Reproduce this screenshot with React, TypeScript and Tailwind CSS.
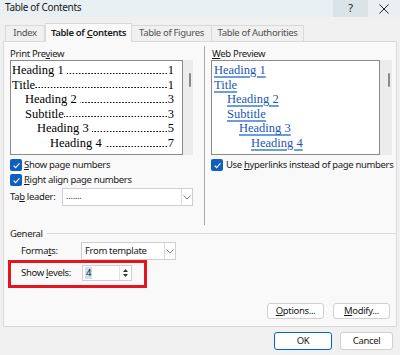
import React from "react";

const U = ({ c }: { c: string }) => <span className="underline underline-offset-[1px]">{c}</span>;

function Check() {
  return (
    <span className="w-[12px] h-[12px] rounded-[2px] bg-[#0f5fbe] flex items-center justify-center shrink-0">
      <svg width="9" height="9" viewBox="0 0 10 10">
        <path d="M1.8 5.2 L4 7.3 L8.3 2.6" stroke="white" strokeWidth="1.3" fill="none" />
      </svg>
    </span>
  );
}

function Chevron() {
  return (
    <svg width="8" height="5" viewBox="0 0 8 5">
      <path d="M0.5 0.5 L4 4 L7.5 0.5" stroke="#707070" strokeWidth="0.9" fill="none" />
    </svg>
  );
}

const printRows: [string, number, string][] = [
  ["Heading 1 ", 0, "1"],
  ["Title", 0, "1"],
  ["Heading 2 ", 1, "3"],
  ["Subtitle", 1, "3"],
  ["Heading 3 ", 2, "5"],
  ["Heading 4 ", 3, "7"],
];
const indent = ["pl-[0px]", "pl-[13px]", "pl-[25px]", "pl-[38px]"];
const windent = ["pl-[0px]", "pl-[13px]", "pl-[25px]", "pl-[37px]"];

export default function App() {
  return (
    <div
      className="w-[400px] h-[355px] bg-[#f0f0f0] relative overflow-hidden text-[#1a1a1a] text-[9.5px] tracking-[-0.33px]"
      style={{ fontFamily: '"Noto Sans", "Open Sans", sans-serif' }}
    >
      {/* title bar */}
      <div className="h-[17px] bg-[#e8f0f4] flex items-center">
        <div className="pl-[5px] flex-1 text-[10px] -mt-[2px]">Table of Contents</div>
        <div className="w-[35px] h-[17px] bg-[#d9e3e8] flex items-center justify-center text-[11px]">?</div>
        <div className="w-[32px] h-[17px] flex items-center justify-center">
          <svg width="10" height="10" viewBox="0 0 10 10">
            <path d="M0.5 0.5 L9.5 9.5 M9.5 0.5 L0.5 9.5" stroke="#222" strokeWidth="1" />
          </svg>
        </div>
      </div>

      {/* tabs */}
      <div className="flex items-end h-[24px] pl-[5px]">
        <div className="h-[16px] w-[40px] border border-b-0 border-[#d9d9d9] flex items-center justify-center text-[#505050]">Index</div>
        <div className="h-[19px] w-[87px] border border-b-0 border-[#d9d9d9] bg-[#f9f9f9] flex items-center justify-center font-semibold relative z-10 -mb-px">
          <span>Table of <U c="C" />ontents</span>
        </div>
        <div className="h-[16px] w-[80px] border border-b-0 border-l-0 border-[#d9d9d9] flex items-center justify-center text-[#505050]">Table of Figures</div>
        <div className="h-[16px] w-[92px] border border-b-0 border-l-0 border-[#d9d9d9] flex items-center justify-center text-[#505050]">Table of Authorities</div>
      </div>

      {/* panel */}
      <div className="mx-[3px] h-[286px] border border-[#dadada] bg-[#f9f9f9] px-[6px]">
        <div className="flex">
          {/* left */}
          <div className="w-[183px] shrink-0 pt-[5px]">
            <div className="h-[13px] leading-[13px]">Print Pre<U c="v" />iew</div>
            <div className="flex h-[95px]">
              <div
                className="flex-1 min-w-0 overflow-hidden bg-white border border-[#8a8a8a] pt-[2px] pl-[1px] pr-[8px] text-[12.5px] leading-[14.6px] tracking-normal text-black"
                style={{ fontFamily: '"Liberation Serif", serif' }}
              >
                {printRows.map(([t, l, n], i) => (
                  <div key={i} className={"flex items-end " + indent[l]}>
                    <span className="whitespace-pre shrink-0">{t}</span>
                    <span className="flex-1 min-w-0 h-[3px] mb-[3px] bg-[radial-gradient(circle,#111_0.65px,transparent_0.95px)] bg-[length:3.1px_3px] bg-repeat-x bg-right" />
                    <span className="shrink-0">{n}</span>
                  </div>
                ))}
              </div>
              <div className="w-[10px] bg-[#ececec] relative shrink-0">
                <div className="absolute left-[6px] top-[13px] w-[2px] h-[14px] bg-[#8a8a8a] rounded-[1px]" />
              </div>
            </div>
            <div className="mt-[3px] h-[14px] flex items-center gap-[2px]">
              <Check />
              <span><U c="S" />how page numbers</span>
            </div>
            <div className="mt-[1px] h-[14px] flex items-center gap-[2px]">
              <Check />
              <span><U c="R" />ight align page numbers</span>
            </div>
            <div className="mt-[1px] h-[18px] flex items-center">
              <span className="w-[52px] shrink-0">Ta<U c="b" /> leader:</span>
              <div className="flex-1 min-w-0 h-[18px] bg-white border border-[#cfcfcf] flex">
                <div className="flex-1 pl-[3px] leading-[14px] text-[#333]">.......</div>
                <div className="w-[11px] border-l border-[#dcdcdc] flex items-center justify-center">
                  <Chevron />
                </div>
              </div>
            </div>
          </div>

          {/* separator */}
          <div className="ml-[11px] mt-[4px] w-px h-[179px] bg-[#a8a8a8] shrink-0" />

          {/* right */}
          <div className="ml-[6px] w-[181px] shrink-0 pt-[5px]">
            <div className="h-[13px] leading-[13px] pl-[1px]"><U c="W" />eb Preview</div>
            <div className="flex h-[95px]">
              <div
                className="flex-1 min-w-0 overflow-hidden bg-white border border-[#8a8a8a] pt-[2px] pl-[2px] text-[12.5px] leading-[14.6px] tracking-normal text-[#1c56b8]"
                style={{ fontFamily: '"Liberation Serif", serif' }}
              >
                {printRows.map(([t, l], i) => (
                  <div key={i} className={windent[l]}>
                    <span className="underline decoration-[#6a9fdc] decoration-2 underline-offset-[2px]">{t.trim()}</span>
                  </div>
                ))}
              </div>
              <div className="w-[12px] bg-[#ececec] relative shrink-0">
                <div className="absolute left-[8px] top-[13px] w-[2px] h-[14px] bg-[#8a8a8a] rounded-[1px]" />
              </div>
            </div>
            <div className="mt-[3px] h-[14px] flex items-center gap-[3px] whitespace-nowrap">
              <Check />
              <span>Use <U c="h" />yperlinks instead of page numbers</span>
            </div>
          </div>
        </div>

        {/* General */}
        <div className="mt-[3px] h-[12px] flex items-center">
          <span className="leading-[12px]">General</span>
          <div className="flex-1 ml-[4px] h-px bg-[#dcdcdc] -mt-[1px] -mr-[6px]" />
        </div>
        <div className="mt-[2px] h-[18px] flex items-center pl-[11px]">
          <span className="w-[60px]">Forma<U c="t" />s:</span>
          <div className="w-[95px] h-[18px] bg-white border border-[#cfcfcf] flex">
            <div className="flex-1 pl-[3px] leading-[16px]">From template</div>
            <div className="w-[11px] border-l border-[#dcdcdc] flex items-center justify-center">
              <Chevron />
            </div>
          </div>
        </div>
        <div className="mt-[5px] h-[16px] flex items-center pl-[11px]">
          <span className="w-[61px]">Show <U c="l" />evels:</span>
          <div className="w-[50px] h-[16px] bg-white border border-[#cfcfcf] flex">
            <div className="flex-1 pl-[2px] flex items-center">
              <span className="bg-[#cce0f5] leading-[12px] px-px">4</span>
            </div>
            <div className="w-[12px] flex flex-col items-center justify-center gap-[2px] border-l border-[#e4e4e4]">
              <svg width="5" height="3" viewBox="0 0 5 3"><path d="M0 3 L2.5 0 L5 3 Z" fill="#333" /></svg>
              <svg width="5" height="3" viewBox="0 0 5 3"><path d="M0 0 L2.5 3 L5 0 Z" fill="#333" /></svg>
            </div>
          </div>
        </div>

        <div className="mt-[22px] flex justify-end gap-[9px]">
          <div className="w-[57px] h-[16px] bg-white border border-[#d0d0d0] rounded-[3px] flex items-center justify-center">
            <span><U c="O" />ptions...</span>
          </div>
          <div className="w-[57px] h-[16px] bg-white border border-[#d0d0d0] rounded-[3px] flex items-center justify-center">
            <span><U c="M" />odify...</span>
          </div>
        </div>
      </div>

      {/* footer */}
      <div className="flex justify-end gap-[8px] pr-[7px] mt-[5px]">
        <div className="w-[58px] h-[18px] bg-white border border-[#0067c0] rounded-[3px] flex items-center justify-center">OK</div>
        <div className="w-[53px] h-[18px] bg-white border border-[#d0d0d0] rounded-[3px] flex items-center justify-center">Cancel</div>
      </div>

      {/* red annotation */}
      <div className="absolute left-[8px] top-[260px] w-[139px] h-[28px] border-[3px] border-[#e5141e]" />
    </div>
  );
}
